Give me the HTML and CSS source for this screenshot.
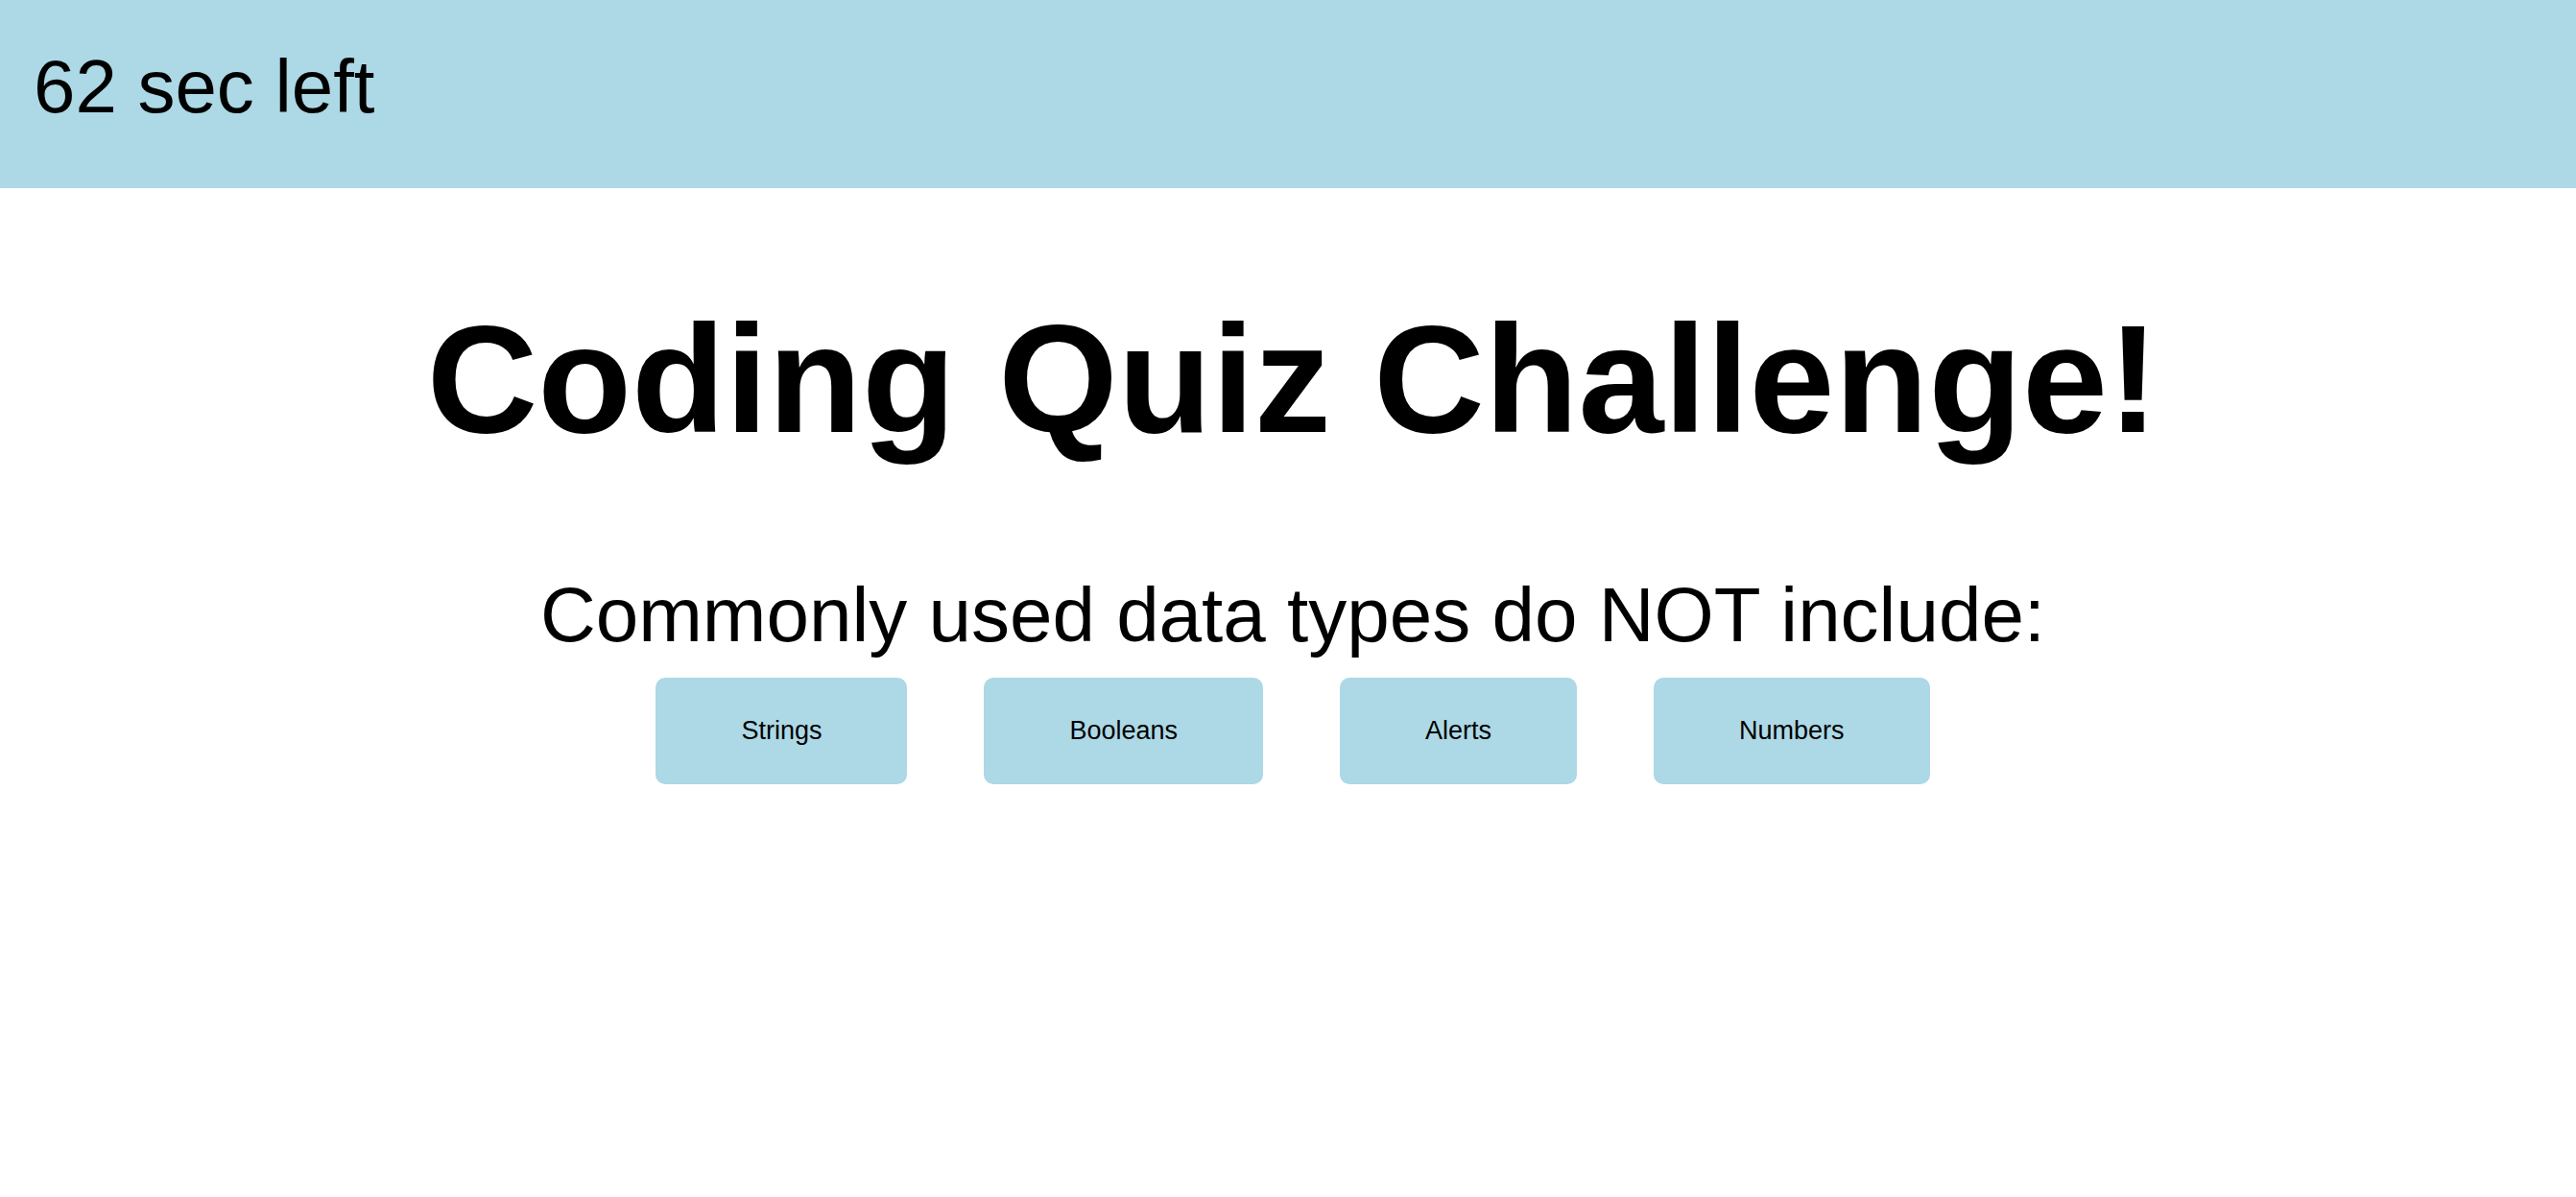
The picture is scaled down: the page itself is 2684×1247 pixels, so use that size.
FILE: index.html
```html
<!DOCTYPE html>
<html lang="en">
<head>
<meta charset="utf-8">
<title>Coding Quiz Challenge</title>
<link rel="stylesheet" href="styles.css">
</head>
<body>
<header class="timer-bar">
  <div class="timer">62 sec left</div>
</header>
<main class="quiz">
  <h1 class="title">Coding Quiz Challenge!</h1>
  <h2 class="question">Commonly used data types do NOT include:</h2>
  <div class="answers">
    <button class="answer">Strings</button>
    <button class="answer">Booleans</button>
    <button class="answer">Alerts</button>
    <button class="answer">Numbers</button>
  </div>
</main>
</body>
</html>
```
FILE: styles.css
```css
html, body {
  margin: 0;
  padding: 0;
  background: #ffffff;
  font-family: "Liberation Sans", Arial, sans-serif;
  color: #000000;
}

.timer-bar {
  box-sizing: border-box;
  height: 196px;
  padding: 51px 35px 0 35px;
  background: #add8e6;
}

.timer {
  font-size: 78px;
  line-height: 78px;
}

.quiz {
  display: flex;
  flex-direction: column;
  align-items: center;
  padding-left: 10px;
}

.title {
  margin: 119px 0 0 0;
  font-size: 160px;
  line-height: 160px;
  font-weight: bold;
}

.question {
  margin: 126px 0 0 0;
  font-size: 80px;
  line-height: 80px;
  font-weight: normal;
}

.answers {
  display: flex;
  justify-content: center;
  gap: 80px;
  margin-top: 25px;
}

.answer {
  font-family: "Liberation Sans", Arial, sans-serif;
  font-size: 27px;
  line-height: 31px;
  padding: 40px 89px;
  border: none;
  border-radius: 10px;
  background: #add8e6;
  color: #000000;
}
```
